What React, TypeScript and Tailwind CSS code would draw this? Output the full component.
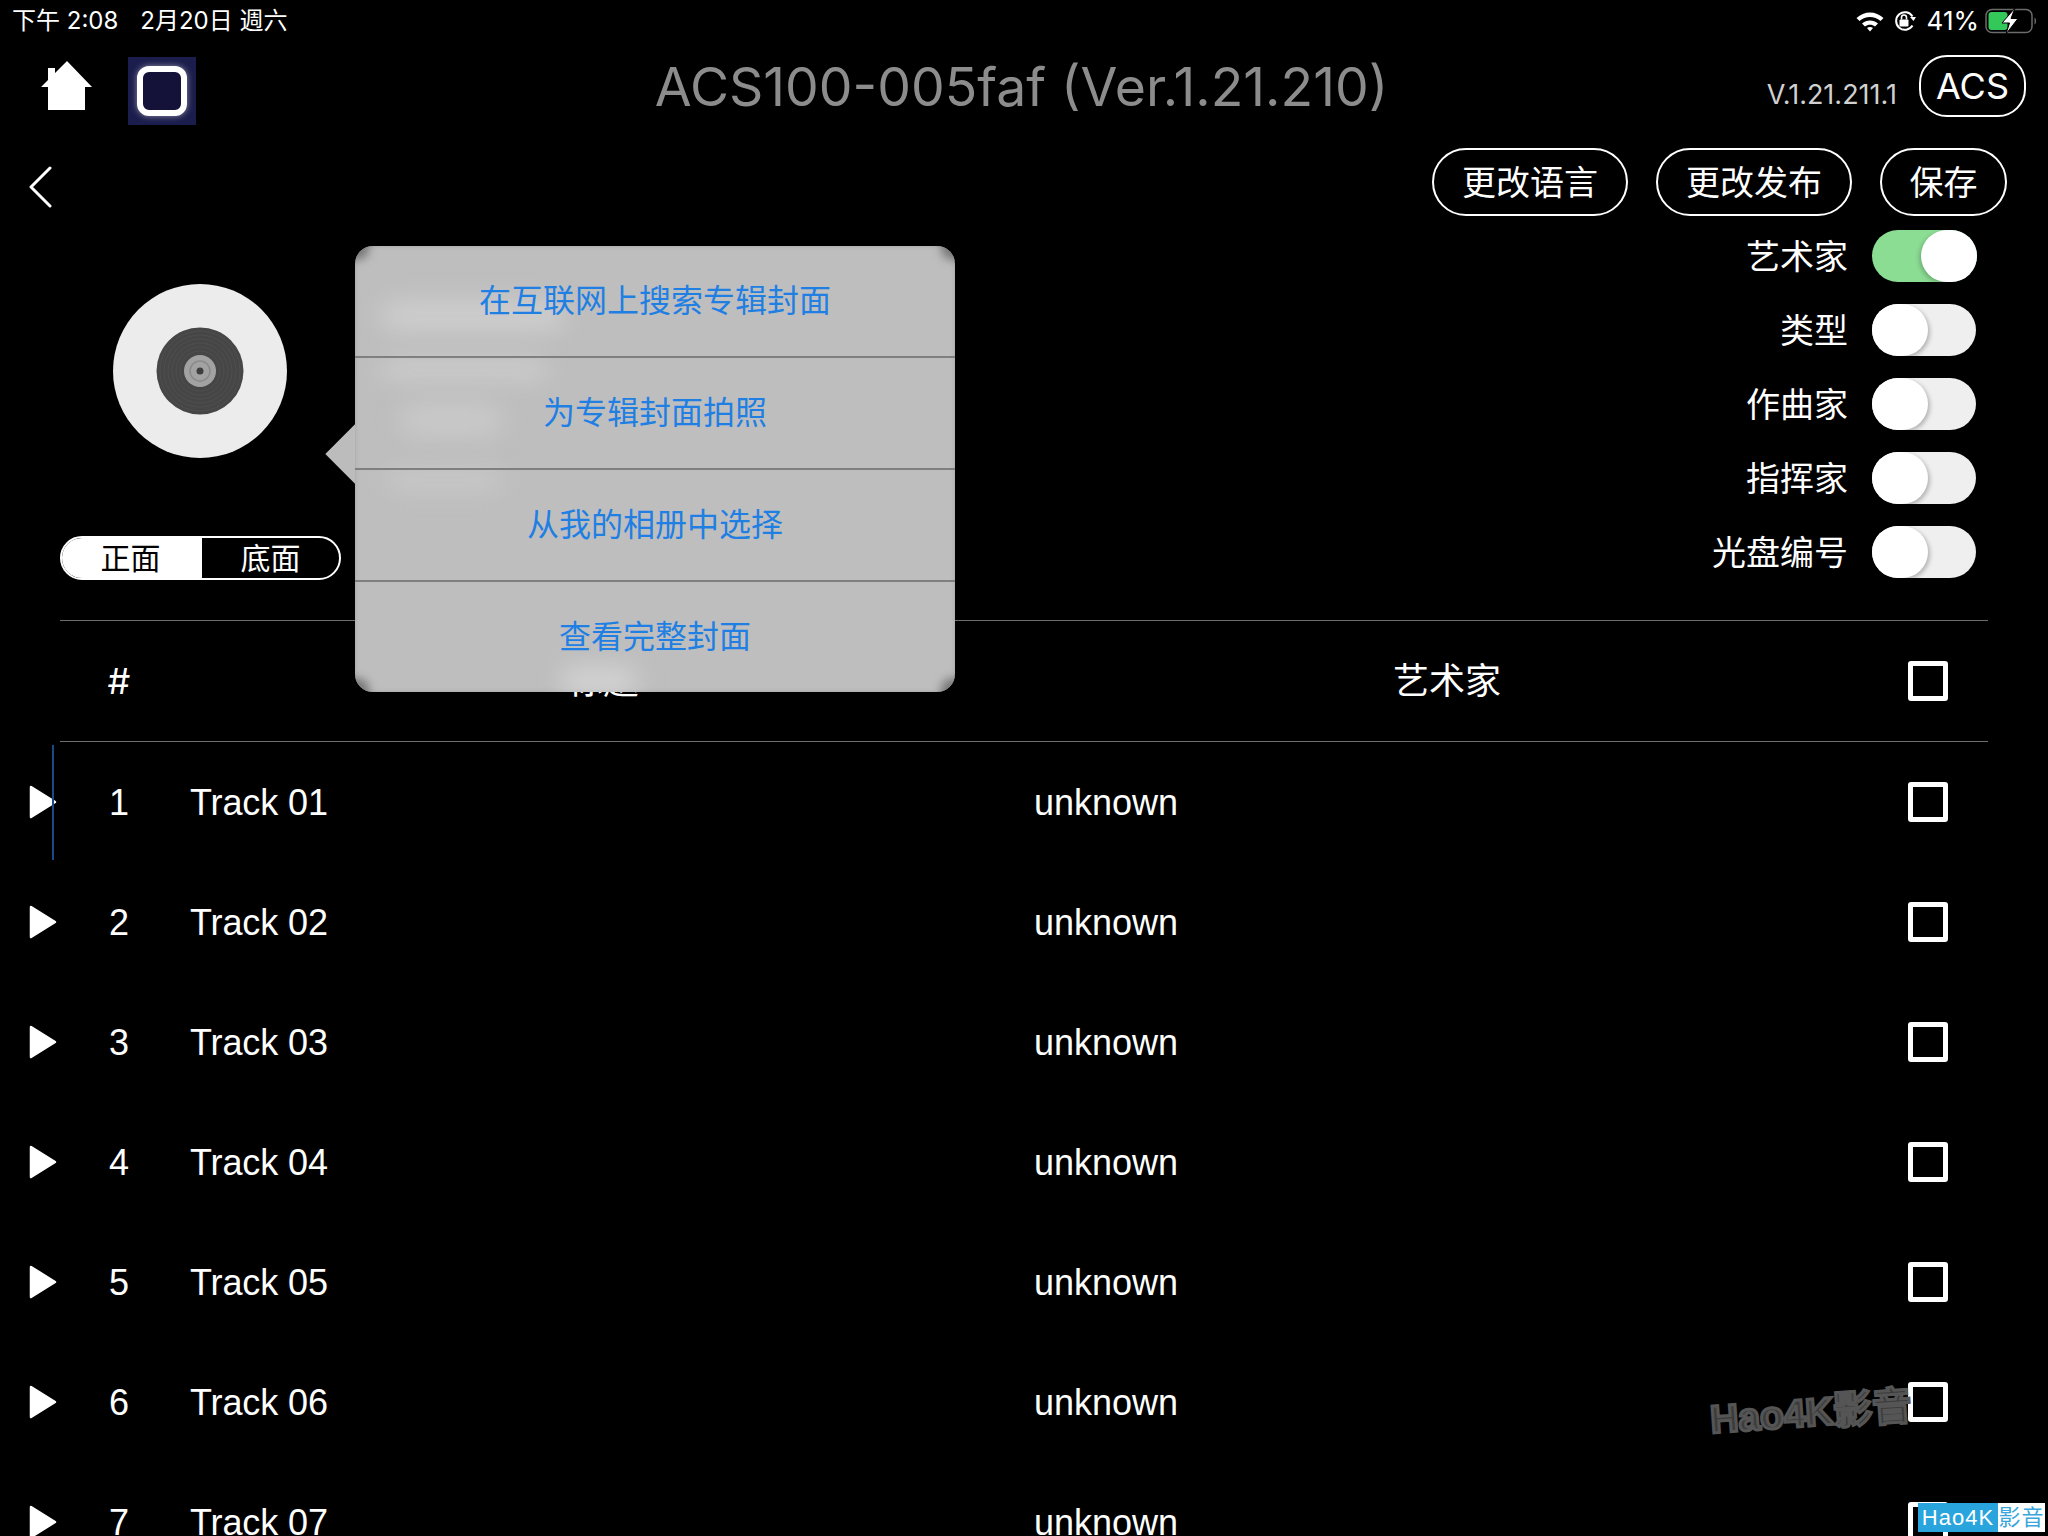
const cjk = "font-['Inter','Noto_Sans_CJK_SC',sans-serif]";

const toggles = [
  { label: '艺术家', on: true },
  { label: '类型', on: false },
  { label: '作曲家', on: false },
  { label: '指挥家', on: false },
  { label: '光盘编号', on: false },
];

const menuItems = ['在互联网上搜索专辑封面', '为专辑封面拍照', '从我的相册中选择', '查看完整封面'];

const tracks = [1, 2, 3, 4, 5, 6, 7];

const grooves = [20, 24, 28, 32, 36, 40];

function Checkbox() {
  return <div className="h-[40px] w-[40px] shrink-0 rounded-[3px] border-[5px] border-white" />;
}

function PlayIcon() {
  return (
    <svg width="28" height="34" viewBox="0 0 28 34" className="shrink-0">
      <path d="M2 2 L26 17 L2 32 Z" fill="#fff" stroke="#fff" strokeWidth="2.5" strokeLinejoin="round" />
    </svg>
  );
}

function Toggle({ on }: { on: boolean }) {
  if (on) {
    return (
      <div className="flex h-[52px] w-[105px] justify-end rounded-full bg-[#8bdd94]">
        <div className="h-[52px] w-[56px] rounded-full bg-white shadow-[-2px_2px_4px_rgba(0,0,0,0.2)]" />
      </div>
    );
  }
  return (
    <div className="h-[52px] w-[104px] rounded-full bg-[#efefef]">
      <div className="h-[52px] w-[56px] rounded-full bg-white shadow-[2px_2px_4px_rgba(0,0,0,0.25)]" />
    </div>
  );
}

function PillButton({ label, width }: { label: string; width: string }) {
  return (
    <div className={`flex h-[68px] items-center justify-center rounded-full border-2 border-white text-[34px] text-white ${width}`}>
      {label}
    </div>
  );
}

function StatusIcons() {
  return (
    <div className="flex items-center text-[26px] text-white">
      <svg width="30" height="22" viewBox="0 0 30 22" className="mr-[8px]">
        <path d="M1.5 8 C9 0.5 21 0.5 28.500 8 L25.500 11 C19.500 5.500 10.500 5.500 4.500 11 Z" fill="#fff" />
        <path d="M7 13.500 C11.500 9.500 18.500 9.500 23 13.500 L20 16.500 C17 14 13 14 10 16.500 Z" fill="#fff" />
        <path d="M12 18 C13.800 16.600 16.200 16.600 18 18 L15 21.500 Z" fill="#fff" />
      </svg>
      <svg width="24" height="22" viewBox="0 0 24 22" className="mr-[10px]">
        <path d="M19.500 15.500 A8.800 8.800 0 1 1 19.500 6.500" fill="none" stroke="#fff" strokeWidth="2" />
        <path d="M17 7 L23 7 L20.500 11 Z" fill="#fff" />
        <rect x="6.500" y="9.500" width="9" height="7" rx="1" fill="#fff" />
        <path d="M8.500 9.500 V7.500 A2.500 2.500 0 0 1 13.500 7.500 V9.500" fill="none" stroke="#fff" strokeWidth="1.600" />
      </svg>
      <span className="mr-[6px]">41%</span>
      <svg width="53" height="26" viewBox="0 0 53 26">
        <rect x="1" y="1.500" width="46" height="23" rx="6" fill="none" stroke="#6b6b6b" strokeWidth="1.500" />
        <rect x="3.500" y="4" width="19" height="18" rx="3" fill="#34c759" />
        <path d="M49.500 9.500 C51.500 10 51.500 16 49.500 16.500 Z" fill="#6b6b6b" />
        <path d="M30 0 L17 15 H24.500 L21 26 L33 10.500 H26 Z" fill="#fff" stroke="#000" strokeWidth="1" />
      </svg>
    </div>
  );
}

function Disc() {
  return (
    <div className="flex h-[174px] w-[174px] items-center justify-center rounded-full bg-[#ececec]">
      <svg width="88" height="88" viewBox="0 0 88 88">
        <circle cx="44" cy="44" r="43.500" fill="#464646" />
        {grooves.map((r) => (
          <circle key={r} cx="44" cy="44" r={r} fill="none" stroke="#505050" strokeWidth="0.800" />
        ))}
        <circle cx="44" cy="44" r="16" fill="#a2a2a2" />
        <circle cx="44" cy="44" r="10" fill="none" stroke="#8a8a8a" strokeWidth="1.500" />
        <circle cx="44" cy="44" r="3.500" fill="#3e3e3e" />
      </svg>
    </div>
  );
}

function Popover() {
  return (
    <div className="absolute left-[355px] top-[246px] z-10 h-[446px] w-[600px]">
      <div className="absolute left-[-21px] top-[187px] h-[42px] w-[42px] rotate-45 bg-[#bcbcbc]" />
      <div className="relative h-full w-full overflow-hidden rounded-[18px] bg-[#bebebe] shadow-[inset_0_0_4px_rgba(120,120,120,0.4)]">
        <div className="absolute left-[25px] top-[54px] h-[32px] w-[185px] rounded-full bg-[#cdcdcd] blur-md" />
        <div className="absolute left-[25px] top-[114px] h-[20px] w-[168px] rounded-full bg-[#cdcdcd] blur-md" />
        <div className="absolute left-[45px] top-[157px] h-[34px] w-[103px] rounded-full bg-[#c9c9c9] blur-md" />
        <div className="absolute left-[30px] top-[224px] h-[20px] w-[118px] rounded-full bg-[#c9c9c9] blur-md" />
        <div className="absolute left-[205px] top-[420px] h-[30px] w-[78px] rounded-full bg-[#d2d2d2] blur-md" />
        {/* darker blurred corners */}
        <div className="absolute left-[-10px] top-[-10px] h-[24px] w-[24px] rounded-full bg-[#777] blur-[5px]" />
        <div className="absolute right-[-10px] top-[-10px] h-[24px] w-[24px] rounded-full bg-[#777] blur-[5px]" />
        <div className="absolute bottom-[-10px] left-[-10px] h-[24px] w-[24px] rounded-full bg-[#777] blur-[5px]" />
        <div className="absolute bottom-[-10px] right-[-10px] h-[24px] w-[24px] rounded-full bg-[#777] blur-[5px]" />
        <div className="relative flex h-full flex-col">
          {menuItems.map((item, i) => (
            <div
              key={item}
              className={`flex shrink-0 items-center justify-center text-[32px] text-[#1f7fe3] ${i > 0 ? 'h-[112px] border-t-2 border-[#7f7f7f]' : 'h-[110px]'}`}
            >
              {item}
            </div>
          ))}
        </div>
      </div>
    </div>
  );
}

function TrackRow({ n }: { n: number }) {
  return (
    <div className="relative flex h-[120px] shrink-0 items-center pl-[29px] font-['Liberation_Sans',sans-serif] text-[36px] text-white">
      <PlayIcon />
      {n === 1 && <div className="absolute left-[52px] top-[3px] h-[115px] w-[2px] bg-[#174a86]" />}
      <div className="ml-[22px] mt-[1px] w-[80px] shrink-0 text-center">{n}</div>
      <div className="ml-[31px] mt-[1px] w-[844px] shrink-0 tracking-[-0.1px]">Track {String(n).padStart(2, '0')}</div>
      <div className="mt-[1px] flex-1">unknown</div>
      <div className="mr-[100px]">
        <Checkbox />
      </div>
    </div>
  );
}

export default function App() {
  return (
    <div className={`relative h-[1536px] w-[2048px] overflow-hidden bg-black ${cjk}`}>
      {/* status bar */}
      <div className="flex h-[40px] items-center justify-between pl-[12px] pr-[10px] pt-[1px] text-[24px] text-white">
        <div className="flex gap-[22px]">
          <span>下午 2:08</span>
          <span>2月20日 週六</span>
        </div>
        <StatusIcons />
      </div>

      {/* title bar */}
      <div className="grid h-[92px] grid-cols-[1fr_auto_1fr] items-center">
        <div className="flex items-center pl-[41px]">
          <svg width="52" height="50" viewBox="0 0 52 50">
            <path d="M26 0 L51 26 H44 V49 H7 V26 H0 L7 19 V7 H14 V12 Z" fill="#fff" strokeLinejoin="round" />
          </svg>
          <div className="ml-[35px] mt-[10px] flex h-[68px] w-[68px] items-center justify-center bg-[#1b1d4c]">
            <div className="h-[50px] w-[50px] rounded-[12px] border-[6px] border-white bg-[#15123a] shadow-[0_0_6px_rgba(255,255,255,0.5)]" />
          </div>
        </div>
        <div className="ml-[-5px] mt-[3px] text-[53.5px] text-[#8c8c8c]">ACS100-005faf (Ver.1.21.210)</div>
        <div className="flex items-center justify-end pr-[22px]">
          <span className="mr-[22px] mt-[18px] text-[27px] text-[#d0d0d0]">V.1.21.211.1</span>
          <div className="flex h-[62px] w-[107px] items-center justify-center rounded-[28px] border-2 border-white text-[36px] text-white">
            ACS
          </div>
        </div>
      </div>

      {/* back and actions */}
      <div className="mt-[16px] flex h-[68px] items-center justify-between pl-[28px] pr-[41px]">
        <svg width="24" height="42" viewBox="0 0 24 42" className="mt-[10px]">
          <path d="M22 2 L3 21 L22 40" fill="none" stroke="#fff" strokeWidth="3" strokeLinecap="round" strokeLinejoin="round" />
        </svg>
        <div className="flex gap-[28px]">
          <PillButton label="更改语言" width="w-[196px]" />
          <PillButton label="更改发布" width="w-[196px]" />
          <PillButton label="保存" width="w-[127px]" />
        </div>
      </div>

      {/* album and field toggles */}
      <div className="flex h-[404px] justify-between">
        <div className="pl-[60px]">
          <div className="ml-[53px] mt-[68px]">
            <Disc />
          </div>
          <div className="mt-[78px] flex h-[44px] w-[281px] overflow-hidden rounded-full border-2 border-white text-[30px]">
            <div className="flex w-[140px] items-center justify-center bg-white pr-[3px] text-black">正面</div>
            <div className="flex flex-1 items-center justify-center text-white">底面</div>
          </div>
        </div>
        <div className="flex flex-col items-end gap-[22px] pr-[71px] pt-[14px]">
          {toggles.map((t) => (
            <div key={t.label} className="flex h-[52px] items-center text-[34px] text-white">
              <span className="mr-[24px]">{t.label}</span>
              <div className="w-[105px]">
                <Toggle on={t.on} />
              </div>
            </div>
          ))}
        </div>
      </div>

      {/* table head */}
      <div className="mx-[60px] h-px bg-[#6e6e6e]" />
      <div className="flex h-[120px] items-center pl-[79px] text-[36px] text-white">
        <div className="w-[80px] shrink-0 text-center">#</div>
        <div className="ml-[31px] w-[826px] shrink-0 text-center">标题</div>
        <div className="w-[862px] shrink-0 text-center">艺术家</div>
        <div className="ml-[30px]">
          <Checkbox />
        </div>
      </div>
      <div className="mx-[60px] h-px bg-[#6e6e6e]" />

      {/* tracks */}
      <div className="flex flex-col">
        {tracks.map((n) => (
          <TrackRow key={n} n={n} />
        ))}
      </div>

      <Popover />

      {/* watermarks */}
      <div className="absolute left-[1710px] top-[1384px] -rotate-[4deg] font-['Liberation_Sans','Noto_Sans_CJK_SC',sans-serif] text-[39px] font-bold text-[#3c3c3c] [-webkit-text-stroke:3px_#555]">
        Hao4K影音
      </div>
      <div className="absolute left-[1918px] top-[1503px] flex h-[29px] w-[127px] font-['Liberation_Sans','Noto_Sans_CJK_SC',sans-serif] text-[22px] tracking-[1px]">
        <div className="flex w-[80px] items-center justify-center bg-[#2aa4dd] text-white">Hao4K</div>
        <div className="flex flex-1 items-center justify-center bg-white text-[#3aa6dc]">影音</div>
      </div>
    </div>
  );
}
